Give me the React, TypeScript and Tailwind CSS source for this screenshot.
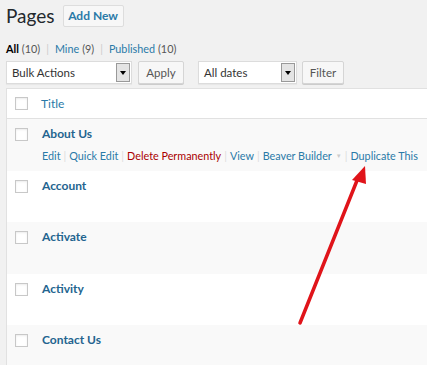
import React from "react";

const font = { fontFamily: 'Lato, "Open Sans", sans-serif' };

function Box() {
  return <div className="shrink-0 w-[13px] h-[13px] border border-[#c8c8c8] bg-white shadow-[inset_0_1px_2px_rgba(0,0,0,0.08)]" />;
}

function Select({ label, w }: { label: string; w: string }) {
  return (
    <div className={`${w} h-[23px] border border-[#dcdcdc] bg-white flex items-center justify-between pl-[5px] pr-[1px] shadow-[0_1px_1px_rgba(0,0,0,0.04)]`}>
      <span className="text-[11.5px] text-[#333]">{label}</span>
      <div className="w-[14px] h-[19px] border border-[#999] bg-[#e4e4e4] flex items-center justify-center">
        <div className="w-0 h-0 border-l-[3px] border-r-[3px] border-t-[4px] border-l-transparent border-r-transparent border-t-black" />
      </div>
    </div>
  );
}

function Btn({ label, w }: { label: string; w: string }) {
  return (
    <div className={`${w} h-[23px] border border-[#d5d5d5] bg-[#f7f7f7] rounded-[2px] flex items-center justify-center text-[11.5px] text-[#555] shadow-[0_1px_0_#ccc]`}>
      {label}
    </div>
  );
}

function Sep() {
  return <span className="text-[#ddd] mx-[3px]">|</span>;
}

function Row({ title, h, gray, actions }: { title: string; h: string; gray?: boolean; actions?: boolean }) {
  return (
    <div className={`${h} flex ${gray ? "bg-[#f9f9f9]" : "bg-white"}`}>
      <div className="shrink-0 w-[35px] pl-[8px] pt-[9px]">
        <Box />
      </div>
      <div className="pt-[6px] flex flex-col">
        <span className="text-[12px] font-bold text-[#23648f] leading-[18px]">{title}</span>
        {actions && (
          <div className="mt-[5px] text-[10.8px] leading-[16px] whitespace-nowrap flex items-center text-[#2a7aa8]">
            <span>Edit</span>
            <Sep />
            <span>Quick Edit</span>
            <Sep />
            <span className="text-[#a00]">Delete Permanently</span>
            <Sep />
            <span>View</span>
            <Sep />
            <span>Beaver Builder</span>
            <span className="text-[#ccc] text-[6px] ml-[4px]">▼</span>
            <Sep />
            <span>Duplicate This</span>
          </div>
        )}
      </div>
    </div>
  );
}

export default function App() {
  return (
    <div className="relative w-[427px] h-[365px] bg-[#f1f1f1] overflow-hidden" style={font}>
      <div className="pl-[6px] pt-[3px]">
        <div className="flex items-center gap-[8px]">
          <span className="text-[19px] text-[#23282d] leading-[26px]">Pages</span>
          <div className="w-[61px] h-[22px] border border-[#ddd] bg-[#f7f7f7] rounded-[2px] flex items-center justify-center text-[12px] font-bold text-[#2a7aa8]">
            Add New
          </div>
        </div>
        <div className="mt-[12px] text-[10.8px] leading-[16px] text-[#555] flex items-center">
          <span className="font-bold text-black">All</span>
          <span className="ml-[3px]">(10)</span>
          <span className="text-[#ccc] mx-[6px]">|</span>
          <span className="text-[#2a7aa8]">Mine</span>
          <span className="ml-[3px]">(9)</span>
          <span className="text-[#ccc] mx-[6px]">|</span>
          <span className="text-[#2a7aa8]">Published</span>
          <span className="ml-[3px]">(10)</span>
        </div>
        <div className="mt-[4px] flex items-center">
          <Select label="Bulk Actions" w="w-[126px]" />
          <div className="ml-[6px]">
            <Btn label="Apply" w="w-[46px]" />
          </div>
          <div className="ml-[14px]">
            <Select label="All dates" w="w-[99px]" />
          </div>
          <div className="ml-[5px]">
            <Btn label="Filter" w="w-[42px]" />
          </div>
        </div>
        <div className="mt-[4px] border-l border-t border-[#e1e1e1] bg-white">
          <div className="h-[30px] flex items-center border-b border-[#e1e1e1]">
            <div className="shrink-0 w-[34px] pl-[8px]">
              <Box />
            </div>
            <span className="text-[12px] text-[#2a7aa8]">Title</span>
          </div>
          <Row title="About Us" h="h-[52px]" gray actions />
          <Row title="Account" h="h-[51px]" />
          <Row title="Activate" h="h-[52px]" gray />
          <Row title="Activity" h="h-[51px]" />
          <Row title="Contact Us" h="h-[52px]" gray />
        </div>
      </div>
      <svg className="absolute left-0 top-0" width="427" height="365" viewBox="0 0 427 365">
        <line x1="300" y1="323" x2="358" y2="178" stroke="#e0141a" strokeWidth="3.5" strokeLinecap="round" />
        <polygon points="365,166 352,180 366,184" fill="#e0141a" />
      </svg>
    </div>
  );
}
